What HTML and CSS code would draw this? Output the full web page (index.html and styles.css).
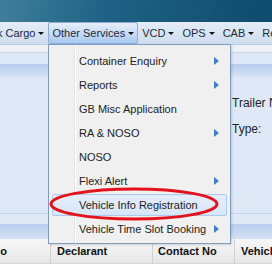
FILE: index.html
```html
<!DOCTYPE html>
<html lang="en">
<head>
    <meta charset="UTF-8">
    <title>Vehicle Info Registration</title>
    <link rel="stylesheet" href="styles.css">
</head>
<body>
    <div class="header"></div>

    <div class="menubar">
        <div class="menu first">Bulk Cargo<span class="caret"></span></div>
        <div class="menu active">Other Services<span class="caret"></span></div>
        <div class="menu">VCD<span class="caret"></span></div>
        <div class="menu">OPS<span class="caret"></span></div>
        <div class="menu">CAB<span class="caret"></span></div>
        <div class="menu">Reports<span class="caret"></span></div>
    </div>

    <div class="toolbar"></div>
    <div class="panel-head"></div>
    <div class="form">
        <div class="form-row">Trailer No:</div>
        <div class="form-row">Type:</div>
    </div>
    <div class="panel-foot"></div>

    <div class="grid-head">
        <div class="col c1">Seq No</div>
        <div class="col c2">Declarant</div>
        <div class="col c3">Contact No</div>
        <div class="col c4">Vehicle</div>
    </div>
    <div class="grid-body"></div>

    <!-- Other Services dropdown -->
    <div class="dropdown">
        <div class="item sub">Container Enquiry</div>
        <div class="item sub">Reports</div>
        <div class="item">GB Misc Application</div>
        <div class="item sub">RA &amp; NOSO</div>
        <div class="item">NOSO</div>
        <div class="item sub">Flexi Alert</div>
        <div class="item hover">Vehicle Info Registration</div>
        <div class="item sub">Vehicle Time Slot Booking</div>
    </div>

    <svg class="circle" width="272" height="278" viewBox="0 0 272 278">
        <ellipse cx="134" cy="204" rx="83" ry="15" fill="none" stroke="#e3121b" stroke-width="3"/>
    </svg>
</body>
</html>
```

FILE: styles.css
```css
body {
    margin: 0;
    width: 272px;
    height: 278px;
    overflow: hidden;
    position: relative;
    font-family: "Liberation Sans", Arial, sans-serif;
    font-size: 11px;
    color: #222;
    background: #fff;
}
.header {
    height: 22px;
    background: linear-gradient(100deg, #3f7f9c 0%, #1f6184 40%, #0e4b6c 100%);
}
.menubar {
    height: 22px;
    display: flex;
    align-items: center;
    white-space: nowrap;
    overflow: hidden;
    background: linear-gradient(to bottom, #e4edf8, #cddcee);
    border-bottom: 1px solid #b9cbe3;
}
.menu {
    flex: none;
    display: flex;
    align-items: center;
    height: 20px;
    padding: 0 4px;
    font-size: 11px;
    color: #1c2a3c;
}
.menu.first {
    margin-left: -23px;
}
.menu.active {
    padding: 0 3px 0 3px;
    background: linear-gradient(to bottom, #e6effa, #c2d8f3 60%, #a9c7ee);
    border: 1px solid #8daedb;
    border-radius: 2px;
}
.caret {
    width: 0;
    height: 0;
    margin-left: 3px;
    border-left: 3px solid transparent;
    border-right: 3px solid transparent;
    border-top: 3px solid #111;
}
.toolbar {
    height: 7px;
    background: #eef1f5;
    border-bottom: 1px solid #c9d6e8;
}
.panel-head {
    height: 24px;
    background: linear-gradient(to bottom, #dfe9f6 0%, #dde8f6 45%, #b7cdec 48%, #d6e3f4 100%);
}
.form {
    height: 136px;
    padding-left: 232px;
    background: #dfe8f6;
    font-size: 12px;
    color: #222;
    white-space: nowrap;
    overflow: hidden;
}
.form-row {
    height: 26px;
    line-height: 26px;
}
.form-row:first-child {
    padding-top: 13px;
}
.panel-foot {
    height: 25px;
    border-top: 1px solid #c4d3e8;
    background: linear-gradient(to bottom, #dfe8f5 0%, #dfe8f5 38%, #b8cfee 42%, #d3e1f3 100%);
}
.grid-head {
    display: flex;
    height: 24px;
    background: linear-gradient(to bottom, #f7f7f7, #e6e6e6);
    border-bottom: 1px solid #d8d8d8;
    font-size: 11px;
    font-weight: bold;
    color: #111;
    overflow: hidden;
}
.col {
    flex: none;
    box-sizing: border-box;
    line-height: 24px;
    padding-left: 6px;
    overflow: hidden;
    white-space: nowrap;
    border-right: 1px solid #d0d0d0;
}
.c1 { width: 88px; margin-left: -37px; }
.c2 { width: 102px; }
.c3 { width: 82px; padding-left: 5px; }
.c4 { width: 60px; border-right: none; }
.grid-body {
    height: 13px;
    background: #fff;
}

.dropdown {
    position: absolute;
    left: 48px;
    top: 44px;
    width: 181px;
    padding: 4px 0 2px;
    background: linear-gradient(to right, #f0f0f0 25px, #e2e3e4 25px, #e2e3e4 26px, #fff 26px, #fff 27px, #f0f0f0 27px);
    border: 1px solid #7f9bc2;
    box-shadow: 1px 1px 2px rgba(0, 0, 0, 0.15);
}
.item {
    position: relative;
    height: 24px;
    line-height: 24px;
    padding-left: 30px;
    font-size: 11px;
    color: #222;
}
.item.sub::after {
    content: "";
    position: absolute;
    right: 11px;
    top: 8px;
    border-top: 4px solid transparent;
    border-bottom: 4px solid transparent;
    border-left: 5px solid #3f7ec8;
}
.item.hover {
    margin: 1px 3px;
    padding-left: 26px;
    height: 22px;
    line-height: 20px;
    background: linear-gradient(to bottom, #e4eefa, #d7e6f8);
    border: 1px solid #a9c9ee;
    border-radius: 2px;
    box-sizing: border-box;
}
.circle {
    position: absolute;
    left: 0;
    top: 0;
}
```
